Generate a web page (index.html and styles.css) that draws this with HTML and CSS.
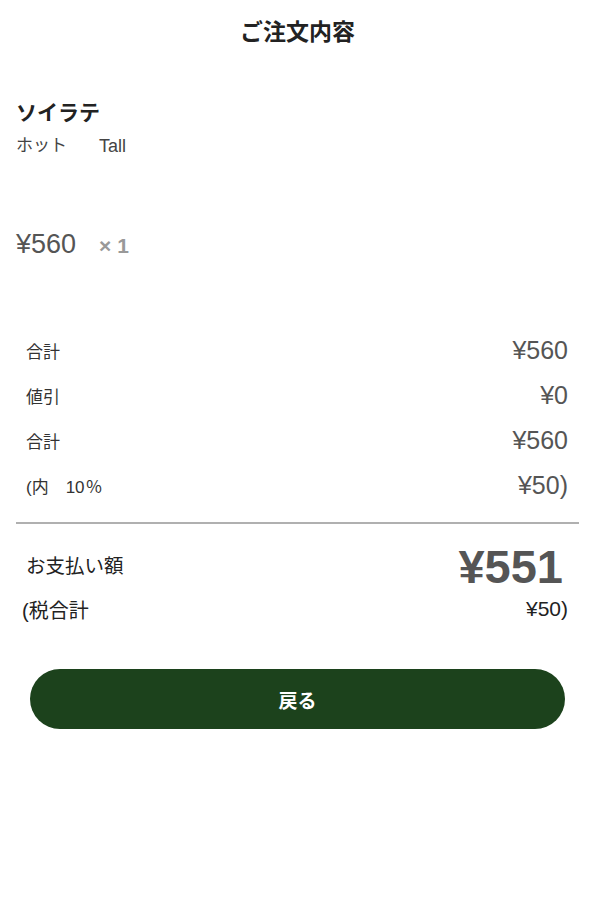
FILE: index.html
```html
<!doctype html>
<html>
<head>
<meta charset=utf8>
<title>ご注文内容</title>
<link rel="stylesheet" href="styles.css">
</head>
<body>
<div class="page">
    <h1 class="title">ご注文内容</h1>

    <div class="item">
        <p class="item-name">ソイラテ</p>
        <p class="item-opts"><span>ホット</span><span>Tall</span></p>
        <p class="item-price"><span class="price">¥560</span><span class="qty">× 1</span></p>
    </div>

    <ul class="summary">
        <li><span>合計</span><span class="val">¥560</span></li>
        <li><span>値引</span><span class="val">¥0</span></li>
        <li><span>合計</span><span class="val">¥560</span></li>
        <li><span>(内　10<span class="pct">％</span></span><span class="val">¥50)</span></li>
    </ul>

    <div class="pay">
        <div class="pay-row"><span>お支払い額</span><span class="total">¥551</span></div>
        <div class="tax-row"><span>(税合計</span><span>¥50)</span></div>
    </div>

    <button class="back">戻る</button>
</div>
</body>
</html>
```

FILE: styles.css
```css
body {
    margin: 0;
    background: #fff;
    color: #222;
    font-family: "Liberation Sans", "Noto Sans CJK JP", sans-serif;
}
p, h1, ul { margin: 0; padding: 0; }
.page { display: flex; flex-direction: column; }

.title {
    height: 64px;
    line-height: 64px;
    text-align: center;
    font-size: 23px;
    font-weight: bold;
    color: #222;
}

.item { padding: 34px 16px 0; }
.item-name { font-size: 21px; font-weight: bold; line-height: 30px; }
.item-opts {
    margin-top: 3px;
    font-size: 17px; line-height: 30px; color: #444;
    display: flex; gap: 32px;
}
.item-opts span:last-child { font-size: 18px; }
.item-price {
    margin-top: 68px;
    display: flex; align-items: baseline; gap: 23px;
}
.price { font-size: 27px; color: #555; }
.qty { font-size: 21px; font-weight: bold; color: #999; }

.summary {
    list-style: none;
    margin: 68px 16px 0;
    padding: 0 11px 14px 10px;
    border-bottom: 2px solid #b0b0b0;
}
.summary li {
    display: flex; justify-content: space-between; align-items: center;
    height: 45px;
    font-size: 17px; color: #333;
}
.summary .pct { font-family: "Noto Sans CJK JP", sans-serif; margin-left: 1px; }
.summary .val { font-size: 25px; color: #555; }

.pay { padding: 16px 29px 0 26px; }
.pay-row {
    display: flex; justify-content: space-between; align-items: center;
    height: 52px;
    font-size: 19px; color: #222;
}
.pay-row span:first-child { font-size: 19.5px; margin-top: -3px; }
.total { font-size: 47px; font-weight: bold; color: #555; padding-right: 3px; }
.tax-row {
    display: flex; justify-content: space-between; align-items: center;
    height: 40px; margin-top: -3px;
    font-size: 20px; color: #222;
}
.tax-row span:first-child { margin-left: -4px; }
.tax-row span:last-child { margin-right: -2px; font-size: 21px; }

.back {
    margin: 40px 30px 0;
    height: 60px;
    border: 0;
    border-radius: 30px;
    background: #1c421c;
    color: #fff;
    font-family: "Liberation Sans", "Noto Sans CJK JP", sans-serif;
    font-size: 19px;
    font-weight: bold;
}
```
